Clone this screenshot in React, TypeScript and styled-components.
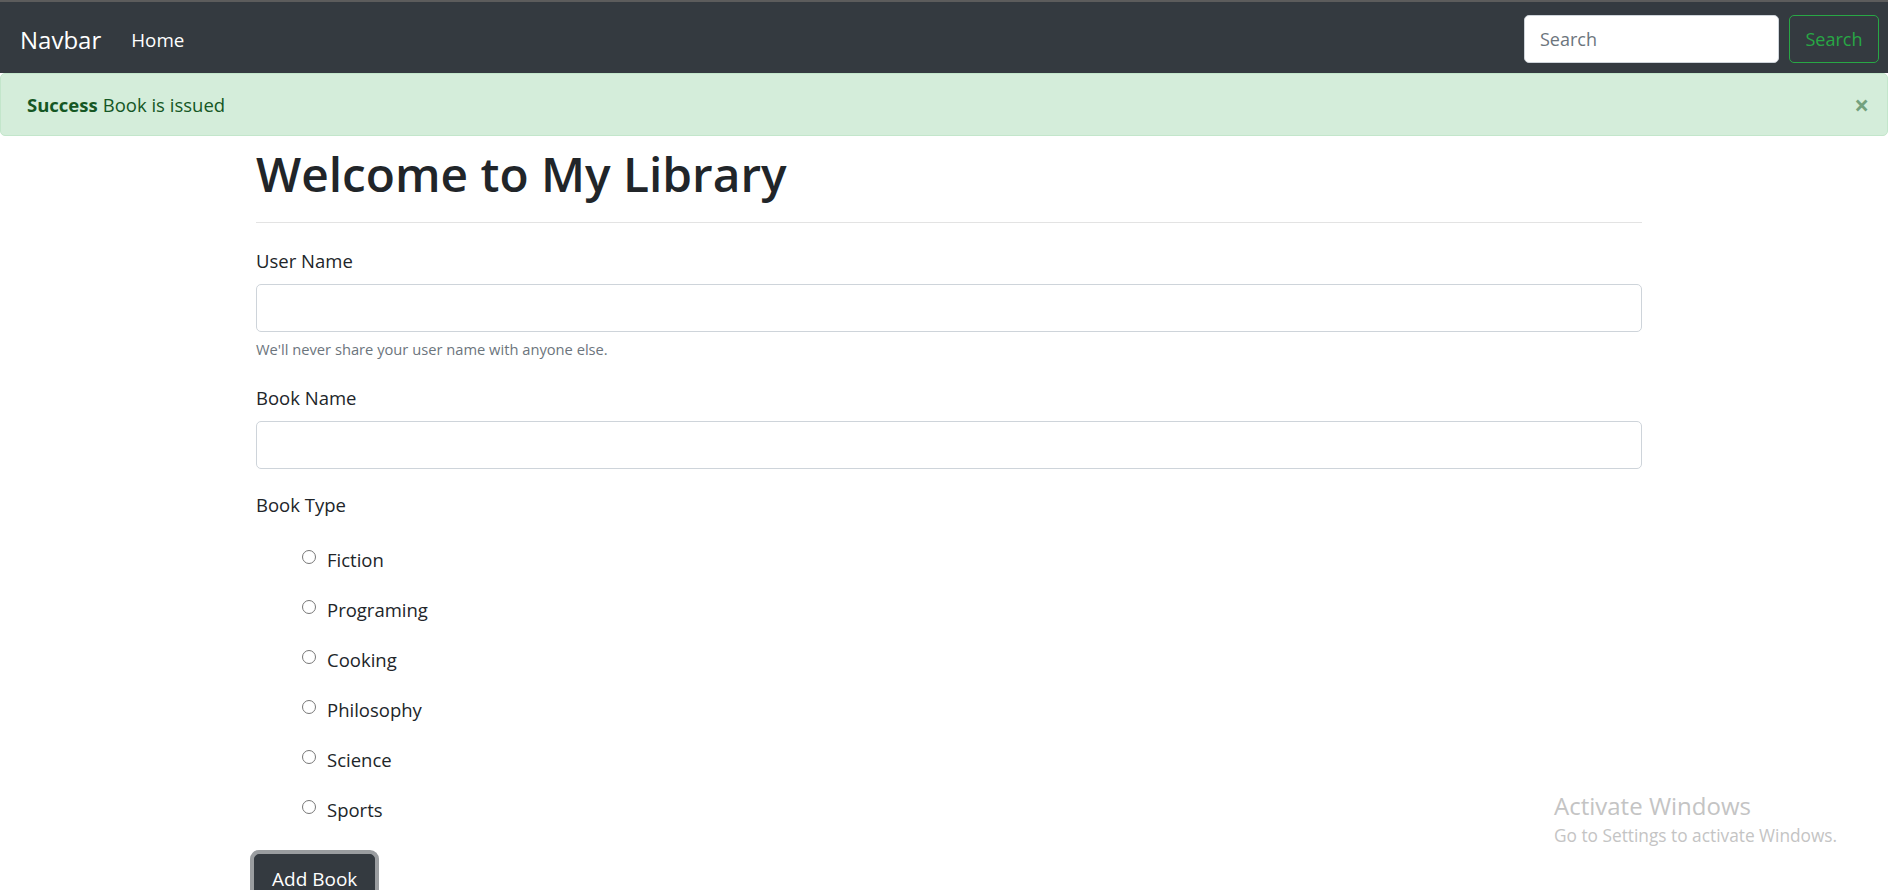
import React from "react";
import styled, { createGlobalStyle } from "styled-components";

const Global = createGlobalStyle`
  html, body { margin: 0; padding: 0; background: #fff; }
  body {
    font-family: "Open Sans", "Noto Sans", sans-serif;
    color: #212529;
    font-size: 18.5px;
    overflow: hidden;
  }
  * { box-sizing: border-box; }
`;

const Page = styled.div`
  position: relative;
  width: 1888px;
  height: 890px;
  overflow: hidden;
`;

const Nav = styled.nav`
  display: flex;
  align-items: center;
  height: 73px;
  border-top: 2px solid #5c5c5c;
  background: #343a40;
  padding: 0 9px 0 20px;
`;

const Brand = styled.a`
  color: #fff;
  font-size: 24px;
  margin-right: 30px;
  margin-top: 4px;
  text-decoration: none;
`;

const NavLink = styled.a`
  color: #fff;
  font-size: 18.8px;
  margin-top: 4px;
  text-decoration: none;
`;

const SearchForm = styled.form`
  margin-left: auto;
  display: flex;
  gap: 10px;
  margin-top: 3px;
`;

const SearchInput = styled.input`
  width: 255px;
  height: 48px;
  border: 1px solid #ced4da;
  border-radius: 5px;
  padding: 0 15px;
  font: inherit;
  font-size: 18px;
  &::placeholder { color: #6c757d; }
`;

const OutlineButton = styled.button`
  width: 90px;
  height: 48px;
  background: transparent;
  border: 1px solid #28a745;
  border-radius: 5px;
  color: #28a745;
  font: inherit;
  font-size: 18px;
`;

const Alert = styled.div`
  display: flex;
  align-items: center;
  height: 63px;
  padding: 0 26px;
  background: #d4edda;
  border: 1px solid #c3e6cb;
  border-radius: 5px;
  color: #155724;
  font-size: 18.5px;
`;

const Strong = styled.strong`
  font-weight: 700;
  margin-right: 5px;
`;

const Close = styled.span`
  margin-left: auto;
  margin-right: -8px;
  font-size: 26px;
  font-weight: 700;
  color: #155724;
  opacity: 0.5;
  line-height: 1;
`;

const Container = styled.main`
  width: 1386px;
  margin-left: 256px;
`;

const Title = styled.h1`
  margin: 9px 0 0;
  font-size: 47.8px;
  font-weight: 600;
  line-height: 58px;
`;

const Rule = styled.hr`
  margin: 19px 0 0;
  border: 0;
  border-top: 1px solid #e3e3e3;
`;

const Group = styled.div<{ $top: number }>`
  display: flex;
  flex-direction: column;
  margin-top: ${(p) => p.$top}px;
`;

const Label = styled.label`
  display: block;
  line-height: 26px;
  font-size: 18.5px;
  margin-bottom: 10px;
`;

const TextInput = styled.input`
  width: 100%;
  height: 48px;
  border: 1px solid #ced4da;
  border-radius: 5px;
  padding: 0 15px;
  font: inherit;
`;

const Help = styled.small`
  display: block;
  margin-top: 7px;
  font-size: 14.7px;
  line-height: 20px;
  color: #6c757d;
`;

const RadioList = styled.div`
  display: flex;
  flex-direction: column;
  gap: 24px;
  padding-left: 46px;
  margin-top: 18px;
`;

const RadioRow = styled.label`
  display: flex;
  align-items: center;
  height: 26px;
  font-size: 18.5px;
`;

const Radio = styled.input`
  appearance: none;
  width: 14px;
  height: 14px;
  margin: -4px 11px 0 0;
  border: 1px solid #777;
  border-radius: 50%;
  background: #fff;
`;

const SubmitButton = styled.button`
  margin-top: 32px;
  margin-left: -2px;
  padding: 10px 17px 0;
  height: 60px;
  background: #343a40;
  color: #fff;
  font: inherit;
  font-size: 19px;
  line-height: 28px;
  border: 1px solid #343a40;
  border-radius: 5px;
  box-shadow: 0 0 0 4px #9a9da0;
  display: flex;
  align-items: flex-start;
`;

const Watermark = styled.div`
  position: absolute;
  left: 1554px;
  top: 792px;
  color: #c4c4c4;
  line-height: 1.2;
`;

const WmTitle = styled.div`
  font-size: 24px;
`;

const WmSub = styled.div`
  font-size: 17.3px;
  margin-top: 5px;
`;

const types = ["Fiction", "Programing", "Cooking", "Philosophy", "Science", "Sports"];

export default function App() {
  return (
    <Page>
      <Global />
      <Nav>
        <Brand href="#">Navbar</Brand>
        <NavLink href="#">Home</NavLink>
        <SearchForm onSubmit={(e) => e.preventDefault()}>
          <SearchInput placeholder="Search" />
          <OutlineButton type="button">Search</OutlineButton>
        </SearchForm>
      </Nav>
      <Alert>
        <Strong>Success</Strong> Book is issued
        <Close>×</Close>
      </Alert>
      <Container>
        <Title>Welcome to My Library</Title>
        <Rule />
        <Group $top={25}>
          <Label>User Name</Label>
          <TextInput />
          <Help>We'll never share your user name with anyone else.</Help>
        </Group>
        <Group $top={26}>
          <Label>Book Name</Label>
          <TextInput />
        </Group>
        <Group $top={23}>
          <Label>Book Type</Label>
        </Group>
        <RadioList>
          {types.map((t) => (
            <RadioRow key={t}>
              <Radio type="radio" name="type" />
              {t}
            </RadioRow>
          ))}
        </RadioList>
        <SubmitButton type="button">Add Book</SubmitButton>
      </Container>
      <Watermark>
        <WmTitle>Activate Windows</WmTitle>
        <WmSub>Go to Settings to activate Windows.</WmSub>
      </Watermark>
    </Page>
  );
}
